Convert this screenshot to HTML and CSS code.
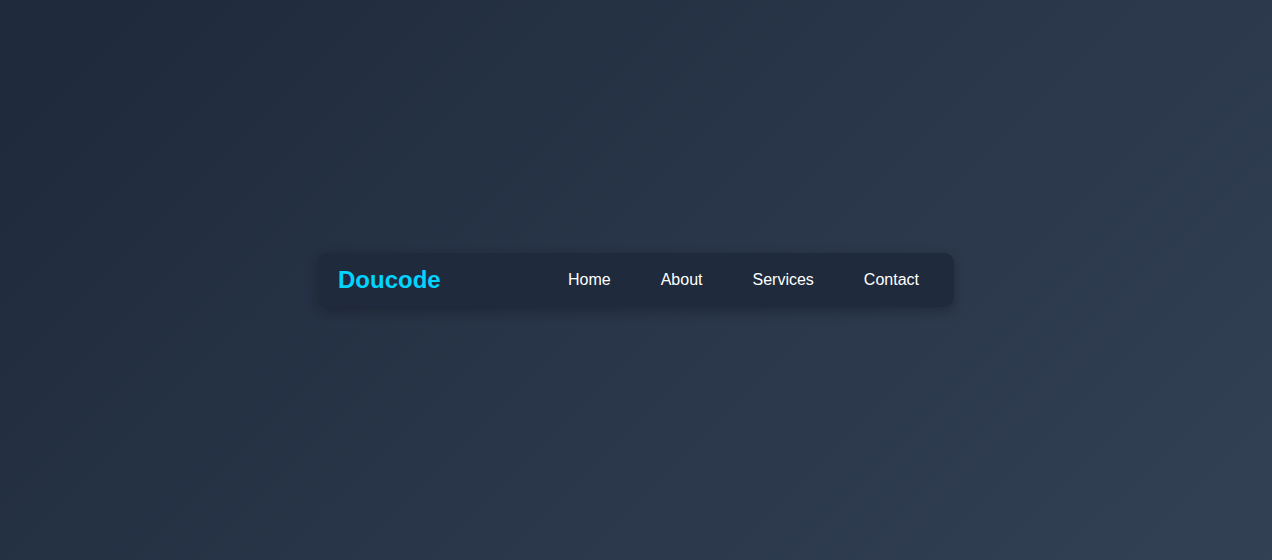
FILE: index.html
```html
<!DOCTYPE html>
<html lang="en">
<head>
<meta charset="utf-8">
<title>Doucode</title>
<link rel="stylesheet" href="styles.css">
</head>
<body>
<nav class="navbar">
  <a class="logo" href="#">Doucode</a>
  <ul class="nav-links">
    <li><a href="#">Home</a></li>
    <li><a href="#">About</a></li>
    <li><a href="#">Services</a></li>
    <li><a href="#">Contact</a></li>
  </ul>
</nav>
</body>
</html>
```

FILE: styles.css
```css
* { box-sizing: border-box; }
html, body { height: 100%; }
body {
  margin: 0;
  min-height: 100vh;
  display: flex;
  align-items: center;
  justify-content: center;
  background: linear-gradient(135deg, #1e293b, #334155);
  font-family: Arial, "Liberation Sans", sans-serif;
}
.navbar {
  width: 636px;
  height: 54px;
  padding: 0 20px 1px;
  display: flex;
  align-items: center;
  justify-content: space-between;
  background: #1f2a3c;
  border-radius: 10px;
  box-shadow: 0 4px 12px rgba(0, 0, 0, 0.25);
}
.logo {
  color: #00d4ff;
  font-size: 24px;
  font-weight: bold;
  text-decoration: none;
}
.nav-links {
  list-style: none;
  margin: 0;
  padding: 0;
  display: flex;
  gap: 20px;
}
.nav-links a {
  display: block;
  padding: 8px 15px;
  color: #ffffff;
  font-size: 16px;
  text-decoration: none;
}
```
